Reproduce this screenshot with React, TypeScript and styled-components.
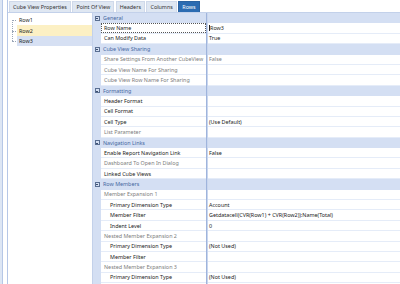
import React from "react";
import styled, { createGlobalStyle } from "styled-components";

const GlobalStyle = createGlobalStyle`
  html, body {
    margin: 0;
    padding: 0;
    background: #ffffff;
  }
  body {
    font-family: "Noto Sans", "Open Sans", sans-serif;
    font-size: 5.4px;
    color: #222222;
  }
`;

type RowKind = "cat" | "prop";
interface GridRow {
  kind: RowKind;
  name: string;
  value?: string;
  dim?: boolean;
  dimValue?: boolean;
  level?: number;
  focus?: boolean;
}

const rows: GridRow[] = [
  { kind: "cat", name: "General" },
  { kind: "prop", name: "Row Name", value: "Row3", focus: true },
  { kind: "prop", name: "Can Modify Data", value: "True" },
  { kind: "cat", name: "Cube View Sharing" },
  { kind: "prop", name: "Share Settings From Another CubeView", value: "False", dim: true, dimValue: true },
  { kind: "prop", name: "Cube View Name For Sharing", dim: true },
  { kind: "prop", name: "Cube View Row Name For Sharing", dim: true },
  { kind: "cat", name: "Formatting" },
  { kind: "prop", name: "Header Format" },
  { kind: "prop", name: "Cell Format" },
  { kind: "prop", name: "Cell Type", value: "(Use Default)" },
  { kind: "prop", name: "List Parameter", dim: true },
  { kind: "cat", name: "Navigation Links" },
  { kind: "prop", name: "Enable Report Navigation Link", value: "False" },
  { kind: "prop", name: "Dashboard To Open In Dialog", dim: true },
  { kind: "prop", name: "Linked Cube Views" },
  { kind: "cat", name: "Row Members" },
  { kind: "prop", name: "Member Expansion 1", dim: true },
  { kind: "prop", name: "Primary Dimension Type", value: "Account", level: 1 },
  { kind: "prop", name: "Member Filter", value: "Getdatacell(CVR(Row1) + CVR(Row2)):Name(Total)", level: 1 },
  { kind: "prop", name: "Indent Level", value: "0", level: 1 },
  { kind: "prop", name: "Nested Member Expansion 2", dim: true },
  { kind: "prop", name: "Primary Dimension Type", value: "(Not Used)", level: 1 },
  { kind: "prop", name: "Member Filter", level: 1 },
  { kind: "prop", name: "Nested Member Expansion 3", dim: true },
  { kind: "prop", name: "Primary Dimension Type", value: "(Not Used)", level: 1 },
];

const tabs = ["Cube View Properties", "Point Of View", "Headers", "Columns", "Rows"];
const treeItems = ["Row1", "Row2", "Row3"];

const Page = styled.div`
  display: flex;
  width: 400px;
  height: 284px;
  overflow: hidden;
`;

const Frame = styled.div`
  width: 2px;
  flex: none;
  background: #dde6f4;
  border-right: 1px solid #b6c7e6;
`;

const FrameGap = styled.div`
  width: 4px;
  flex: none;
  border-right: 1px solid #b6c7e6;
`;

const Main = styled.div`
  flex: 1;
  display: flex;
  flex-direction: column;
  min-width: 0;
`;

const TabBar = styled.div`
  height: 12px;
  display: flex;
  align-items: flex-end;
  gap: 1.5px;
  padding-left: 1px;
  border-bottom: 1px solid #c3d1ea;
  flex: none;
`;

const Tab = styled.div<{ $active?: boolean }>`
  height: 11px;
  box-sizing: border-box;
  display: flex;
  align-items: center;
  padding: 0 3px;
  background: ${(p) => (p.$active ? "#2c6cb2" : "#dfe7f2")};
  color: ${(p) => (p.$active ? "#ffffff" : "#333333")};
  border: 1px solid ${(p) => (p.$active ? "#2a62a0" : "#cfd9ea")};
  border-bottom: none;
  white-space: nowrap;
`;

const Body = styled.div`
  flex: 1;
  display: flex;
  min-height: 0;
`;

const Tree = styled.div`
  width: 84px;
  flex: none;
  padding-top: 2px;
  position: relative;
`;

const TreeItem = styled.div<{ $bg: string }>`
  height: 10.4px;
  margin-left: 9px;
  padding-left: 2px;
  display: flex;
  align-items: center;
  background: ${(p) => p.$bg};
  position: relative;
  &::before {
    content: "";
    position: absolute;
    left: -5px;
    top: 50%;
    width: 4px;
    border-top: 1px dotted #9aa6b8;
  }
`;

const TreeLine = styled.div`
  position: absolute;
  left: 4px;
  top: 7px;
  height: 21px;
  border-left: 1px dotted #9aa6b8;
`;

const Grid = styled.div`
  flex: 1;
  min-width: 0;
  background: linear-gradient(to right, #d4dff3 0, #d4dff3 8px, transparent 8px);
  border-left: 1px solid #c3d1ea;
  position: relative;
`;

const Divider = styled.div`
  position: absolute;
  left: 113px;
  top: 0;
  bottom: 0;
  width: 1px;
  background: #9fb4dc;
  box-shadow: 1px 0 0 #c9d6ee;
`;

const CatRow = styled.div`
  height: 10.4px;
  display: flex;
  align-items: center;
  background: #d4dff3;
  color: #45679f;
`;

const Toggle = styled.div`
  width: 8px;
  flex: none;
  display: flex;
  justify-content: center;
  align-items: center;
`;

const ToggleBox = styled.div`
  width: 3px;
  height: 3px;
  border: 0.7px solid #5a6f92;
  position: relative;
  &::after {
    content: "";
    position: absolute;
    left: 0.5px;
    right: 0.5px;
    top: 1.2px;
    height: 0.7px;
    background: #3d4f6e;
  }
`;

const CatLabel = styled.div`
  padding-left: 2px;
`;

const PropRow = styled.div`
  height: 10.4px;
  box-sizing: border-box;
  display: flex;
  margin-left: 8px;
  background: #ffffff;
  border-bottom: 1px solid #e5ecf8;
`;

const NameCell = styled.div<{ $level: number; $dim?: boolean; $focus?: boolean }>`
  width: 105px;
  flex: none;
  box-sizing: border-box;
  display: flex;
  align-items: center;
  padding-left: ${(p) => 3 + p.$level * 6}px;
  color: ${(p) => (p.$dim ? "#7d7d7d" : "#222222")};
  white-space: nowrap;
  overflow: hidden;
  outline: ${(p) => (p.$focus ? "1px dotted #555" : "none")};
  outline-offset: -1px;
`;

const ValueCell = styled.div<{ $dim?: boolean }>`
  flex: 1;
  display: flex;
  align-items: center;
  padding-left: 3px;
  color: ${(p) => (p.$dim ? "#7d7d7d" : "#222222")};
  white-space: nowrap;
`;

const Caret = styled.span`
  display: inline-block;
  width: 0.6px;
  height: 6px;
  background: #222;
  margin-right: 0.5px;
`;

const App: React.FC = () => {
  return (
    <>
      <GlobalStyle />
      <Page>
        <Frame />
        <FrameGap />
        <Main>
          <TabBar>
            {tabs.map((t) => (
              <Tab key={t} $active={t === "Rows"}>
                {t}
              </Tab>
            ))}
          </TabBar>
          <Body>
            <Tree>
              <TreeLine />
              {treeItems.map((t) => (
                <TreeItem
                  key={t}
                  $bg={t === "Row2" ? "#fcf0c4" : t === "Row3" ? "#d6e0f3" : "transparent"}
                >
                  {t}
                </TreeItem>
              ))}
            </Tree>
            <Grid>
              <Divider />
              {rows.map((r, i) =>
                r.kind === "cat" ? (
                  <CatRow key={i}>
                    <Toggle>
                      <ToggleBox />
                    </Toggle>
                    <CatLabel>{r.name}</CatLabel>
                  </CatRow>
                ) : (
                  <PropRow key={i}>
                    <NameCell $level={r.level ?? 0} $dim={r.dim} $focus={r.focus}>
                      {r.name}
                    </NameCell>
                    <ValueCell $dim={r.dimValue}>
                      {r.focus && <Caret />}
                      {r.value}
                    </ValueCell>
                  </PropRow>
                )
              )}
            </Grid>
          </Body>
        </Main>
      </Page>
    </>
  );
};

export default App;
